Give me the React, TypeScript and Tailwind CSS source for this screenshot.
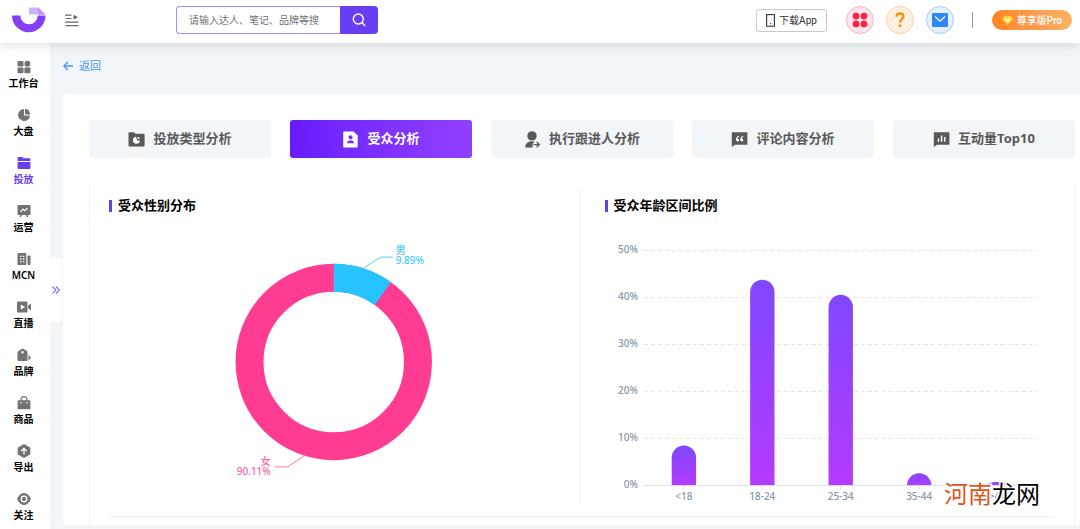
import type { ReactNode } from "react";

type NavItem = { label: string; icon: ReactNode; active?: boolean };

const navItems: NavItem[] = [
  {
    label: "工作台",
    icon: (
      <>
        <rect x="0.5" y="1" width="6" height="5.6" rx="1" />
        <circle cx="10.4" cy="3.8" r="3" />
        <rect x="0.5" y="7.6" width="6" height="5.6" rx="1" />
        <rect x="7.4" y="7.6" width="6" height="5.6" rx="1" />
      </>
    ),
  },
  {
    label: "大盘",
    icon: (
      <>
        <path d="M7 1a6 6 0 1 0 6 6.4H7Z" />
        <path d="M8 .8a6 6 0 0 1 5.2 5.6H8Z" />
      </>
    ),
  },
  {
    label: "投放",
    active: true,
    icon: (
      <>
        <path d="M.6 1.8a.8.8 0 0 1 .8-.8h3.9l1.3 1.2h6a.8.8 0 0 1 .8.8v1.9H.6Z" />
        <path d="M.6 6h12.8v6a1 1 0 0 1-1 1H1.6a1 1 0 0 1-1-1Z" />
      </>
    ),
  },
  {
    label: "运营",
    icon: (
      <>
        <path d="M1.4 1h11.2a.9.9 0 0 1 .9.9v8.2a.9.9 0 0 1-.9.9h-2l.8 2H9.8L9 11H5l-.8 2H2.6l.8-2h-2a.9.9 0 0 1-.9-.9V1.9a.9.9 0 0 1 .9-.9Z" />
        <path d="M3.5 7.8 6 5l1.7 1.7 2.8-2.5" fill="none" stroke="#fff" strokeWidth="1.2" />
      </>
    ),
  },
  {
    label: "MCN",
    icon: (
      <>
        <rect x="0.5" y="1" width="8.8" height="12" rx="1" />
        <rect x="10.5" y="3.5" width="3" height="9.5" rx="0.8" />
        <path d="M3 4.300h1.500M5.800 4.300h1.500M3 7h1.500M5.800 7h1.500M3 9.700h1.500M5.800 9.700h1.500" stroke="#fff" strokeWidth="1.3" />
      </>
    ),
  },
  {
    label: "直播",
    icon: (
      <>
        <rect x="0" y="1.5" width="10.5" height="11" rx="1" />
        <path d="M11 6l3-2.800v7.600L11 8Z" />
        <path d="M3.800 4.500v5L8 7Z" fill="#fff" />
      </>
    ),
  },
  {
    label: "品牌",
    icon: (
      <>
        <path
          fillRule="evenodd"
          d="M5.100.8a1.200 1.200 0 0 1 1.200 0l3.400 2a1.600 1.600 0 0 1 .8 1.400V12a1 1 0 0 1-1 1h-8a1 1 0 0 1-1-1V4.700a1.600 1.600 0 0 1 .7-1.400ZM5.500 3a1.200 1.200 0 1 0 0 2.400 1.200 1.200 0 0 0 0-2.400Z"
        />
        <path d="M11.500 6.500 14 9.700l-2.500 3Z" />
      </>
    ),
  },
  {
    label: "商品",
    icon: (
      <>
        <path d="M4 5V3.600a3 3 0 0 1 6 0V5" fill="none" stroke="currentColor" strokeWidth="1.2" />
        <path d="M1.500 4.200h11a.8.8 0 0 1 .8.8l.2 7.200a1 1 0 0 1-1 1h-11a1 1 0 0 1-1-1L.7 5a.8.8 0 0 1 .8-.8Z" />
        <circle cx="4" cy="6.8" r="0.8" fill="#fff" />
        <circle cx="10" cy="6.8" r="0.8" fill="#fff" />
      </>
    ),
  },
  {
    label: "导出",
    icon: (
      <>
        <path d="M6.400.3a1.300 1.300 0 0 1 1.200 0l5 2.900a1.200 1.200 0 0 1 .7 1.100v5.400a1.200 1.200 0 0 1-.7 1.100l-5 2.900a1.300 1.300 0 0 1-1.200 0l-5-2.900a1.200 1.200 0 0 1-.7-1.100V4.300a1.200 1.200 0 0 1 .7-1.100Z" />
        <path d="M7 10.500V4.500M4.200 7 7 4.300 9.800 7" fill="none" stroke="#fff" strokeWidth="1.3" />
      </>
    ),
  },
  {
    label: "关注",
    icon: (
      <>
        <path d="M0 7C2 2.800 4.300 1 7 1s5 1.800 7 6c-2 4.200-4.300 6-7 6S2 11.200 0 7Z" />
        <circle cx="7" cy="7" r="2.8" fill="none" stroke="#fff" strokeWidth="1.3" />
      </>
    ),
  },
];

type Tab = { label: string; icon: ReactNode; active?: boolean };

const tabs: Tab[] = [
  {
    label: "投放类型分析",
    icon: (
      <>
        <path d="M.5 2A.8.8 0 0 1 1.300 1.200H6l1.500 1.600h8.300a.8.8 0 0 1 .8.8v11a.8.8 0 0 1-.8.8H1.300a.8.8 0 0 1-.8-.8Z" />
        <path d="M8.300 5.800a3.500 3.500 0 1 0 3.700 3.800c-2.300.6-4-1-3.700-3.800Z" fill="#fff" />
        <path d="M9.600 5.800a3.100 3.100 0 0 1 2.300 2.300H9.600Z" fill="#fff" />
      </>
    ),
  },
  {
    label: "受众分析",
    active: true,
    icon: (
      <>
        <path d="M2 .4h9.500l4.200 4v11.400a.8.8 0 0 1-.8.8H2a.8.8 0 0 1-.8-.8V1.200A.8.8 0 0 1 2 .4Z" />
        <circle cx="8.5" cy="6.3" r="2" fill="#7a2bff" />
        <path d="M5 12.200c.2-2.200 1.600-3 3.500-3s3.300.8 3.500 3Z" fill="#7a2bff" />
      </>
    ),
  },
  {
    label: "执行跟进人分析",
    icon: (
      <>
        <circle cx="8" cy="4.9" r="4.7" />
        <path d="M1.200 16.500c.3-4 2.900-6.200 6.600-6.200 1 0 1.900.2 2.700.5L8.600 13v3.500Z" />
        <path d="M9.500 13.600h5.600M12.600 11l2.700 2.600-2.700 2.600" fill="none" stroke="currentColor" strokeWidth="1.4" />
      </>
    ),
  },
  {
    label: "评论内容分析",
    icon: (
      <>
        <path d="M.8 1.200h15.600v12.500H4L.8 16Z" />
        <path
          d="M8 4.800c-2 .6-3 2-3 3.800 0 1.200.6 2 1.600 2 .9 0 1.500-.6 1.500-1.400S7.500 7.800 6.600 7.800c0-.9.500-1.600 1.600-2.200ZM12.200 4.800c-2 .6-3 2-3 3.800 0 1.200.6 2 1.600 2 .9 0 1.500-.6 1.500-1.400s-.6-1.400-1.500-1.400c0-.9.500-1.600 1.600-2.200Z"
          fill="#fff"
        />
      </>
    ),
  },
  {
    label: "互动量Top10",
    icon: (
      <>
        <path d="M.8 1.200h15.600v12.500H4L.8 16Z" />
        <path d="M5.500 7.500v3.300M8.600 4.500v6.300M11.700 6v4.800" stroke="#fff" strokeWidth="1.5" />
      </>
    ),
  },
];

const ages = [
  { label: "<18", value: 8.5 },
  { label: "18-24", value: 43.7 },
  { label: "25-34", value: 40.5 },
  { label: "35-44", value: 2.6 },
  { label: ">44", value: 0.7 },
];

function Header() {
  return (
    <header className="relative z-20 flex h-[43px] shrink-0 items-center bg-white pr-2 pb-[3px] pl-3 shadow-[0_2px_12px_rgba(0,0,0,0.13)]">
      <a href="#home" aria-label="首页">
        <svg className="block h-[26px] w-[34px]" viewBox="0 0 34 26">
          <path d="M0 8.500h8.300a8.700 8.700 0 0 0 17.400 0H33.500a16.750 16.750 0 0 1-33.500 0Z" fill="#843ff5" />
          <path d="M17 .5h9l7.500 7h-8V7.500H17Z" fill="#cdb3fb" />
          <path d="M26 .5l7.500 7H26Z" fill="#b792f8" />
        </svg>
      </a>
      <button type="button" aria-label="折叠菜单" className="ml-[19px] text-[#666]">
        <svg className="block h-[13px] w-[14px]" viewBox="0 0 14 13">
          <path d="M0 1.200h6.500M1 4.500h5.500M0 8.200h13.500M.5 11.700h13" stroke="currentColor" strokeWidth="1.2" />
          <path d="M8.500.8l4.500 2.400-4.500 2.400Z" fill="currentColor" />
        </svg>
      </button>
      <form className="ml-[97px] flex h-7 w-[202px]">
        <input
          type="search"
          aria-label="搜索"
          placeholder="请输入达人、笔记、品牌等搜"
          className="min-w-0 flex-1 rounded-l border border-r-0 border-[#a48bf5] bg-white pr-2 pl-3 text-[10px] text-[#555] outline-none placeholder:text-[#707070]"
        />
        <button type="button" aria-label="搜索" className="flex w-[38px] items-center justify-center rounded-r bg-[#683df3] text-white">
          <svg className="h-[14px] w-[14px]" viewBox="0 0 14 14" fill="none" stroke="currentColor" strokeWidth="1.4">
            <circle cx="6.3" cy="6" r="5" />
            <path d="M10 9.700l3.200 3.200" />
          </svg>
        </button>
      </form>
      <div className="ml-auto flex items-center font-['Roboto','Noto_Sans_CJK_SC',sans-serif]">
        <button type="button" className="flex h-[23px] w-[71px] items-center justify-center gap-1 rounded-[3px] border border-[#c8c8c8] text-[10px] text-[#333]">
          <svg className="h-[13px] w-[9px]" viewBox="0 0 9 13" fill="none" stroke="#333">
            <rect x="0.6" y="0.6" width="7.8" height="11.6" strokeWidth="1.1" />
            <path d="M4 9.700h1.200" strokeWidth="1.2" />
          </svg>
          下载App
        </button>
        <button type="button" aria-label="应用" className="ml-[19px] flex size-7 items-center justify-center rounded-full border border-[#f9b4c1] bg-[#fde6eb]">
          <svg className="size-4" viewBox="0 0 15 15" fill="#fb2444">
            <circle cx="3.8" cy="3.8" r="3.2" />
            <circle cx="11.2" cy="3.8" r="3.2" />
            <circle cx="3.8" cy="11.2" r="3.2" />
            <circle cx="11.2" cy="11.2" r="3.2" />
          </svg>
        </button>
        <button type="button" aria-label="帮助" className="ml-3 flex size-7 items-center justify-center rounded-full border border-[#fccd94] bg-[#fff1e1]">
          <svg className="h-[16px] w-[10px]" viewBox="0 0 10 16">
            <path d="M1.500 4.700C1.500 2.500 3 1.500 5 1.500s3.500 1.100 3.500 3.100C8.500 7.300 5 7.300 5 10.500" fill="none" stroke="#ff8f0a" strokeWidth="2.4" />
            <circle cx="5" cy="13.8" r="1.5" fill="#ff8f0a" />
          </svg>
        </button>
        <button type="button" aria-label="消息" className="ml-3 flex size-7 items-center justify-center rounded-full border border-[#a5cbfa] bg-[#e6f1fe]">
          <svg className="h-[14px] w-[16px]" viewBox="0 0 16 14">
            <rect width="16" height="14" rx="1" fill="#2f86f6" />
            <path d="M3 3.500l5 4.700 5-4.700" fill="none" stroke="#fff" strokeWidth="1.2" />
          </svg>
        </button>
        <span className="ml-[18px] h-4 w-px bg-[#999]" />
        <button
          type="button"
          className="ml-[19px] flex h-5 w-20 items-center justify-center gap-1 rounded-full bg-linear-to-r from-[#ff8420] to-[#ffb166] text-[10px] font-medium text-white"
        >
          <svg className="h-[9px] w-[11px]" viewBox="0 0 11 9">
            <path d="M2.500 0h6L11 3 5.500 9 0 3Z" fill="#ffd83d" />
            <path d="M3.300 3l2.200 2.200L7.700 3" fill="none" stroke="#fff" strokeWidth="1.1" />
          </svg>
          尊享版Pro
        </button>
      </div>
    </header>
  );
}

function Sidebar() {
  return (
    <nav className="relative w-[50px] shrink-0 bg-white pt-[17px] pr-[3px]">
      {navItems.map((item) => (
        <a
          key={item.label}
          href="#nav"
          className={`flex h-12 flex-col items-center gap-[2px] text-[10px] leading-[14px] font-semibold ${item.active ? "text-[#673ff3]" : "text-black"}`}
        >
          <svg
            className={`size-[14px] ${item.active ? "text-[#673ff3]" : "text-[#737373]"}`}
            viewBox="0 0 14 14"
            fill="currentColor"
          >
            {item.icon}
          </svg>
          {item.label}
        </a>
      ))}
      <button
        type="button"
        aria-label="展开"
        className="absolute top-[215px] left-full flex h-16 w-3 items-center justify-center rounded-r-sm bg-white text-[#8a68f6]"
      >
        <svg className="h-[8px] w-[8px]" viewBox="0 0 8 8" fill="none" stroke="currentColor" strokeWidth="1.1">
          <path d="M.5.500 4 4 .5 7.500M4 .5 7.500 4 4 7.500" />
        </svg>
      </button>
    </nav>
  );
}

function PanelTitle({ children }: { children: ReactNode }) {
  return (
    <h2 className="flex h-5 items-center gap-[6px] text-[13px] font-bold text-black">
      <span className="h-3 w-[3px] bg-[#673ff3]" />
      {children}
    </h2>
  );
}

function GenderChart() {
  return (
    <svg className="block h-[287px] w-full" viewBox="0 0 490 287" role="img" aria-label="受众性别分布">
      <circle cx="244" cy="146" r="84.3" fill="none" stroke="#ff3b92" strokeWidth="28" />
      <path d="M244 47.700A98.300 98.300 0 0 1 301.200 66.070L284.910 88.840A70.300 70.300 0 0 0 244 75.700Z" fill="#26c4ff" />
      <path d="M274 52l17-11h12" fill="none" stroke="#26c4ff" strokeOpacity="0.8" />
      <path d="M214 240l-16 11h-13" fill="none" stroke="#ff3b92" strokeOpacity="0.7" />
      <g fontSize="10" fontWeight="500" fill="#45cbfb">
        <text x="306" y="38">男</text>
        <text x="306" y="48">9.89%</text>
      </g>
      <g fontSize="10" fontWeight="500" fill="#fb62a4" textAnchor="end">
        <text x="181" y="249">女</text>
        <text x="181" y="259">90.11%</text>
      </g>
    </svg>
  );
}

function AgeChart() {
  const base = 269.5;
  const unit = 4.71;
  return (
    <svg className="block h-[287px] w-full" viewBox="0 0 494 287" role="img" aria-label="受众年龄区间比例">
      <defs>
        <linearGradient id="bar" x1="0" y1="0" x2="0" y2="1">
          <stop offset="0" stopColor="#8048ff" />
          <stop offset="1" stopColor="#b43aff" />
        </linearGradient>
        <clipPath id="plot">
          <rect x="0" y="0" width="494" height={base} />
        </clipPath>
      </defs>
      {[0, 10, 20, 30, 40, 50].map((tick) => {
        const y = Math.round(base - tick * unit - 0.5) + 0.5;
        return (
          <g key={tick}>
            <path d={`M63 ${y}H457`} stroke={tick ? "#e4e4e4" : "#dcdfe3"} strokeDasharray={tick ? "4 3" : undefined} />
            <text x="57" y={y + 2.5} fontSize="10" fontWeight="500" textAnchor="end" fill="#8795a8">
              {tick}%
            </text>
          </g>
        );
      })}
      {ages.map((age, i) => {
        const x = 103 + i * 78.5;
        const top = base - age.value * unit;
        const h = Math.max(age.value * unit, 3);
        const r = 12.2;
        const cap = Math.min(r, h);
        return (
          <g key={age.label}>
            <path d={`M${x} ${base}v4`} stroke="#dcdfe3" />
            <path
              clipPath="url(#plot)"
              d={`M${x - r} ${base}V${top + cap}A${r} ${cap} 0 0 1 ${x + r} ${top + cap}V${base}Z`}
              fill="url(#bar)"
            />
            <text x={x} y="284" fontSize="10" fontWeight="500" textAnchor="middle" fill="#8795a8">
              {age.label}
            </text>
          </g>
        );
      })}
    </svg>
  );
}

export default function App() {
  return (
    <div className="flex min-h-screen flex-col bg-[#f3f6f9] font-['Noto_Sans','Noto_Sans_CJK_SC',sans-serif]">
      <Header />
      <div className="flex flex-1">
        <Sidebar />
        <main className="min-w-0 flex-1 pt-[13px] pl-[13px]">
          <a href="#back" className="flex h-5 items-center gap-[6px] text-[11px] text-[#4a90f7]">
            <svg className="h-[10px] w-[10px]" viewBox="0 0 10 10" fill="none" stroke="currentColor" strokeWidth="1.3">
              <path d="M10 5H1M4.800 1 .9 5l3.900 4" />
            </svg>
            返回
          </a>
          <section className="mt-[18px] rounded-l-[3px] bg-white pt-[26px] pr-[5px] pl-[26px]">
            <div role="tablist" className="grid grid-cols-5 gap-[19px]">
              {tabs.map((tab) => (
                <button
                  key={tab.label}
                  type="button"
                  role="tab"
                  aria-selected={!!tab.active}
                  className={`flex h-[38px] items-center justify-center gap-2 rounded-[3px] text-[13px] font-bold ${
                    tab.active ? "bg-linear-to-r from-[#681bff] to-[#923eff] text-white" : "bg-[#f3f6f9] text-[#595959]"
                  }`}
                >
                  <svg className="size-[17px]" viewBox="0 0 17 17" fill="currentColor">
                    {tab.icon}
                  </svg>
                  {tab.label}
                </button>
              ))}
            </div>
            <div className="mt-[25px] border-x border-[#f0f1f4] pt-[6px] pb-2">
              <div className="grid grid-cols-[490fr_495fr]">
                <div className="pt-[7px]">
                  <div className="pl-[19px]">
                    <PanelTitle>受众性别分布</PanelTitle>
                  </div>
                  <GenderChart />
                </div>
                <div className="relative border-l border-[#f0f1f4] pt-[7px]">
                  <div className="pl-6">
                    <PanelTitle>受众年龄区间比例</PanelTitle>
                  </div>
                  <AgeChart />
                  <p className="absolute right-[34px] -bottom-2 text-[24px] leading-[34px] text-black [-webkit-text-stroke:3px_white] [paint-order:stroke_fill]">
                    <span className="text-[#e0561a]">河南</span>龙网
                  </p>
                </div>
              </div>
              <hr className="mx-[19px] mt-[13px] border-[#f0f1f4]" />
            </div>
          </section>
        </main>
      </div>
    </div>
  );
}
